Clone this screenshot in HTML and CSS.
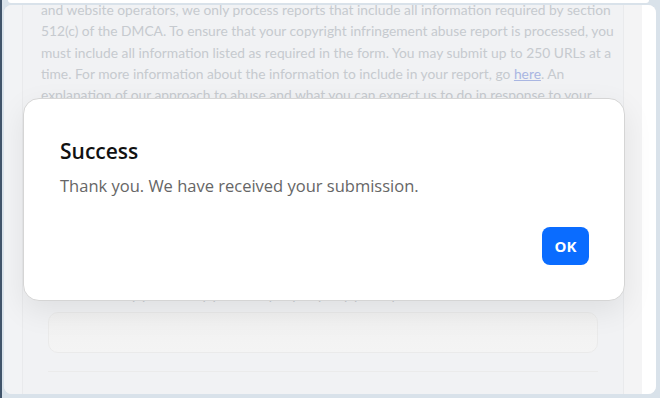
FILE: index.html
```html
<!DOCTYPE html>
<html lang="en">
<head>
  <meta charset="UTF-8" />
  <title>Copyright Infringement Report</title>
  <link rel="stylesheet" href="styles.css">
</head>
<body>
  <!-- Bottom edge of the card above -->
  <div class="top-card"></div>

  <!-- Report window -->
  <div class="window">
    <div class="gutter"></div>

    <div class="panel">
      <p class="intro">
        and website operators, we only process reports that include all information required by section<br>
        512(c) of the DMCA. To ensure that your copyright infringement abuse report is processed, you<br>
        must include all information listed as required in the form. You may submit up to 250 URLs at a<br>
        time. For more information about the information to include in your report, go <a href="#">here</a>. An<br>
        explanation of our approach to abuse and what you can expect us to do in response to your
      </p>

      <label class="field-label">Please identify yourself by your company or party you represent</label>
      <div class="field-box"></div>
      <div class="divider"></div>
    </div>

    <div class="rail"></div>
    <div class="side"></div>

    <!-- Success dialog -->
    <div class="modal">
      <h2>Success</h2>
      <p>Thank you. We have received your submission.</p>
      <div class="modal-actions">
        <button class="ok-btn">OK</button>
      </div>
    </div>
  </div>
</body>
</html>
```

FILE: styles.css
```css
body {
  margin: 0;
  height: 398px;
  overflow: hidden;
  background: #d9e2ea;
  border-left: 2px solid #41546a;
  font-family: 'Open Sans', 'Noto Sans', sans-serif;
}

/* Card above the window */
.top-card {
  height: 3px;
  margin: 0 11px 0 6px;
  background: #fff;
  border-radius: 0 0 4px 4px;
}

/* Window */
.window {
  position: relative;
  display: flex;
  height: 389px;
  margin: 2px 4px 0 2px;
  border-radius: 8px;
  overflow: hidden;
  background: #f3f3f4;
}

.gutter {
  width: 18px;
  background: #f2f3f5;
}

.panel {
  width: 600px;
  background: #f1f2f4;
  border-left: 1px solid #e9eaec;
  border-right: 1px solid #e9eaec;
}

.rail {
  width: 18px;
  background: #f4f4f5;
}

.side {
  flex: 1;
  background: #fff;
}

.intro {
  margin: -6px 0 0 18px;
  font-family: Lato, 'Open Sans', sans-serif;
  font-size: 13.8px;
  line-height: 21.3px;
  color: #c6cacf;
  white-space: nowrap;
}

.intro a {
  color: #a9b6e2;
}

.field-label {
  display: block;
  margin: 179px 0 0 25px;
  font-family: Lato, 'Open Sans', sans-serif;
  font-size: 14px;
  line-height: 21px;
  color: #c6cacf;
}

.field-box {
  height: 41px;
  box-sizing: border-box;
  margin: 7px 25px 0 25px;
  border: 1px solid #eaeaea;
  border-radius: 10px;
  background: linear-gradient(#f1f1f1, #f4f4f4);
}

.divider {
  height: 1px;
  margin: 18px 25px 0 25px;
  background: #ebebeb;
}

/* Success dialog */
.modal {
  position: absolute;
  left: 19px;
  top: 93px;
  width: 602px;
  height: 203px;
  box-sizing: border-box;
  padding: 38px 35px 35px 36px;
  background: #fff;
  border: 1px solid #d5d5d5;
  border-radius: 16px;
  box-shadow: 0 10px 30px rgba(0, 0, 0, 0.08);
  display: flex;
  flex-direction: column;
}

.modal h2 {
  margin: 0;
  font-size: 21px;
  font-weight: 600;
  line-height: 28px;
  color: #111;
}

.modal p {
  margin: 9px 0 0;
  font-size: 16.5px;
  line-height: 24px;
  color: #666;
}

.modal-actions {
  margin-top: auto;
  display: flex;
  justify-content: flex-end;
}

.ok-btn {
  width: 47px;
  height: 38px;
  border: none;
  border-radius: 8px;
  background: #0a6cff;
  color: #fff;
  font-family: 'Open Sans', sans-serif;
  font-size: 15px;
  font-weight: 700;
  cursor: pointer;
}
```
